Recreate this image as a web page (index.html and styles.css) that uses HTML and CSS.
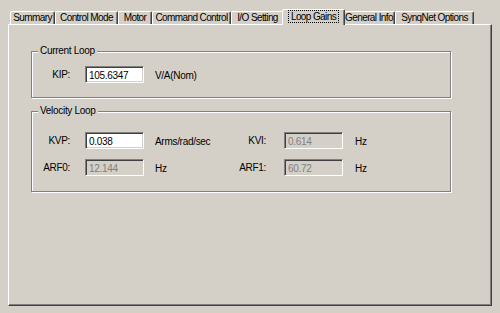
FILE: index.html
```html
<!DOCTYPE html>
<html lang="en">
<head>
    <meta charset="UTF-8">
    <meta name="viewport" content="width=device-width, initial-scale=1.0">
    <title>Loop Gains</title>
    <link rel="stylesheet" href="styles.css">
</head>
<body>
    <div class="window">
        <!-- Tab strip -->
        <div class="tabs">
            <div class="tab tab-summary">Summary</div>
            <div class="tab tab-mode">Control Mode</div>
            <div class="tab tab-motor">Motor</div>
            <div class="tab tab-command">Command Control</div>
            <div class="tab tab-io">I/O Setting</div>
            <div class="tab tab-gains active"><span class="focus">Loop Gains</span></div>
            <div class="tab tab-info">General Info</div>
            <div class="tab tab-synq">SynqNet Options</div>
        </div>

        <!-- Tab page -->
        <div class="panel">
            <div class="group group-current">
                <div class="group-title">Current Loop</div>
                <div class="fields">
                    <label class="lbl">KIP:</label>
                    <input class="box" type="text" value="105.6347">
                    <span class="unit">V/A(Nom)</span>
                </div>
            </div>

            <div class="group group-velocity">
                <div class="group-title">Velocity Loop</div>
                <div class="fields">
                    <label class="lbl">KVP:</label>
                    <input class="box" type="text" value="0.038">
                    <span class="unit">Arms/rad/sec</span>
                    <label class="lbl lbl-right">KVI:</label>
                    <input class="box" type="text" value="0.614" disabled>
                    <span class="unit">Hz</span>

                    <label class="lbl">ARF0:</label>
                    <input class="box" type="text" value="12.144" disabled>
                    <span class="unit">Hz</span>
                    <label class="lbl lbl-right">ARF1:</label>
                    <input class="box" type="text" value="60.72" disabled>
                    <span class="unit">Hz</span>
                </div>
            </div>
        </div>
    </div>
</body>
</html>
```

FILE: styles.css
```css
body {
    margin: 0;
    background: #d4d0c8;
    font-family: "Liberation Sans", Arial, sans-serif;
    font-size: 10px;
    letter-spacing: -0.3px;
    color: #000;
}
.window {
    padding: 9px 8px 0 8px;
}

/* tabs */
.tabs {
    display: flex;
    height: 15px;
    padding-left: 2px;
    position: relative;
    z-index: 1;
    letter-spacing: -0.6px;
}
.tab {
    box-sizing: border-box;
    flex: none;
    height: 13px;
    margin-top: 2px;
    line-height: 12px;
    text-align: center;
    border-top: 1px solid #fff;
    border-left: 1px solid #fff;
    border-right: 1px solid #404040;
    border-radius: 2px 2px 0 0;
    box-shadow: inset -1px 0 0 #808080;
    white-space: nowrap;
    overflow: hidden;
}
.tab-summary { width: 45px; }
.tab-mode { width: 63px; }
.tab-motor { width: 34px; }
.tab-command { width: 79px; }
.tab-io { width: 53px; }
.tab-gains { width: 63px; }
.tab-info { width: 52px; }
.tab-synq { width: 79px; }

.tab.active {
    height: 16px;
    margin: 0 -2px;
    padding-top: 1px;
    background: #d4d0c8;
    position: relative;
    z-index: 2;
    overflow: visible;
}
.focus {
    display: inline-block;
    line-height: 11px;
    padding: 0 2px;
    outline: 1px dotted #000;
}

/* tab page */
.panel {
    box-sizing: border-box;
    width: 484px;
    height: 282px;
    padding: 26px 0 0 22px;
    border-top: 1px solid #fff;
    border-left: 1px solid #fff;
    border-right: 1px solid #404040;
    border-bottom: 1px solid #404040;
    box-shadow: inset -1px -1px 0 #808080;
}

/* etched group boxes */
.group {
    box-sizing: border-box;
    position: relative;
    width: 420px;
    border: 1px solid #808080;
    box-shadow: inset 1px 1px 0 #fff, 1px 1px 0 #fff;
}
.group-title {
    position: absolute;
    top: -7px;
    left: 6px;
    padding: 0 2px;
    background: #d4d0c8;
    line-height: 12px;
}
.group-current {
    height: 47px;
    padding-top: 14px;
}
.group-velocity {
    height: 81px;
    margin-top: 13px;
    padding-top: 20px;
}

.fields {
    display: grid;
    grid-template-columns: 53px 70px 75px 54px 71px auto;
    row-gap: 10px;
    align-items: center;
}
.lbl {
    text-align: right;
    padding-right: 15px;
}
.lbl-right {
    padding-right: 18px;
}
.unit {
    padding-top: 1px;
}

/* sunken edit boxes */
.box {
    box-sizing: border-box;
    width: 59px;
    height: 17px;
    margin: 0;
    padding: 2px 0 0 3px;
    font-family: inherit;
    font-size: 10px;
    letter-spacing: -0.3px;
    color: #000;
    background: #fff;
    border-top: 1px solid #808080;
    border-left: 1px solid #808080;
    border-right: 1px solid #fff;
    border-bottom: 1px solid #fff;
    box-shadow: inset 1px 1px 0 #404040, inset -1px -1px 0 #d4d0c8;
    outline: none;
}
.box:disabled {
    background: #d4d0c8;
    color: #808080;
}
```
